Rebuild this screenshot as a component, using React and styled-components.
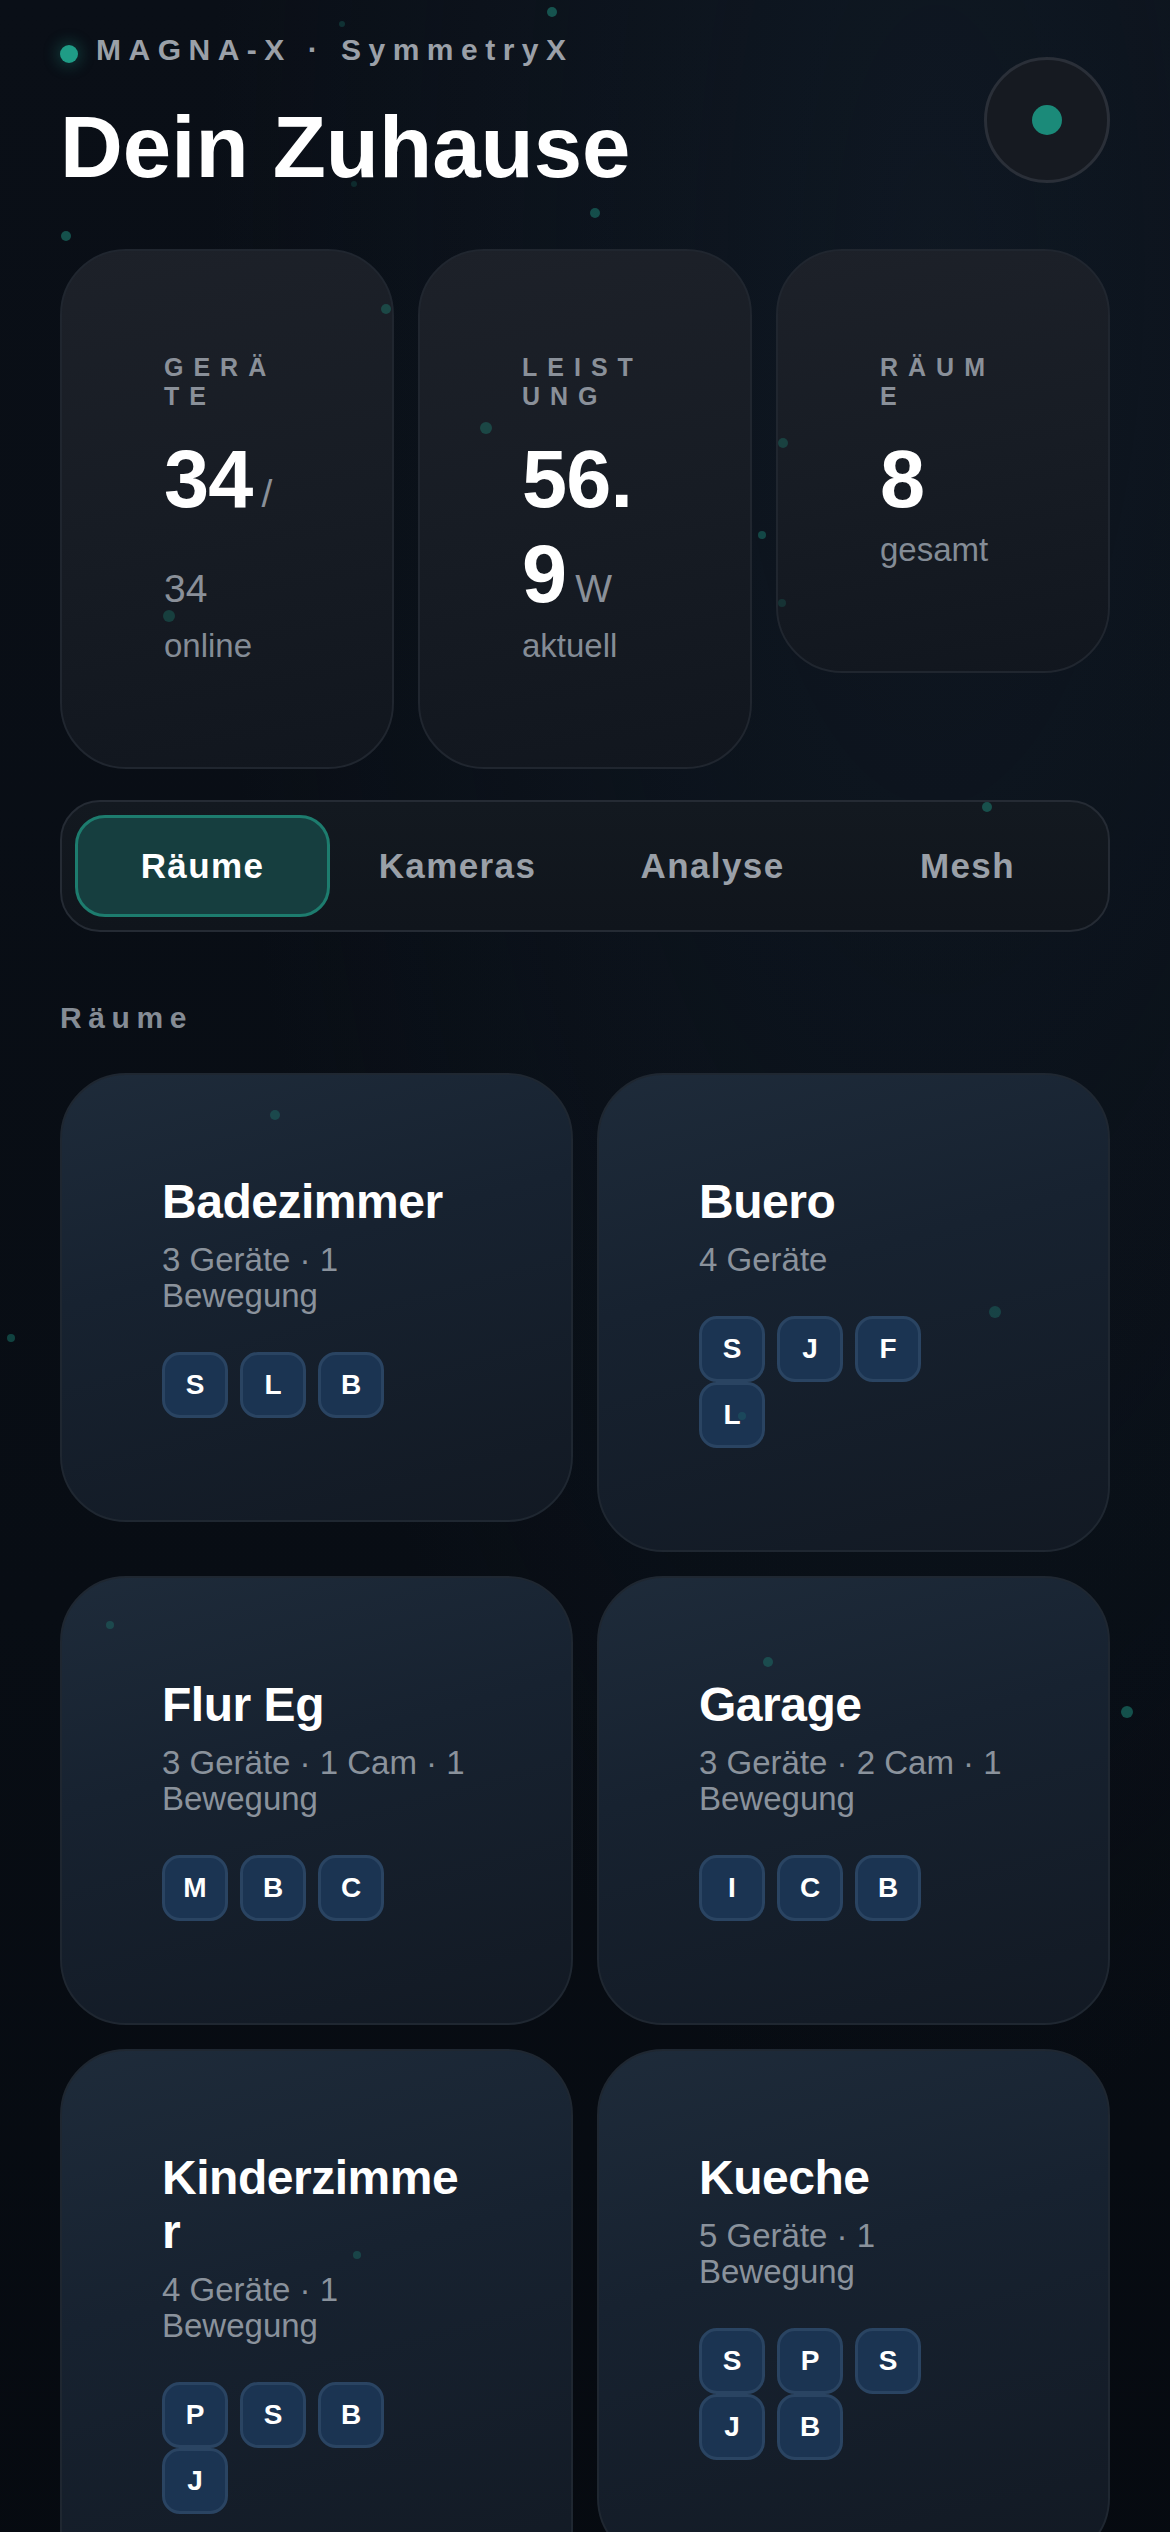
import React from 'react'
import styled, { createGlobalStyle } from 'styled-components'

const GlobalStyle = createGlobalStyle`
  html, body {
    margin: 0;
    padding: 0;
    background: #080d14;
  }
  body {
    font-family: 'Liberation Sans', Arial, sans-serif;
    color: #fff;
    -webkit-font-smoothing: antialiased;
  }
  * {
    box-sizing: border-box;
  }
`

const Page = styled.div`
  position: relative;
  min-height: 2532px;
  overflow: hidden;
  padding: 32px 60px 60px;
  background:
    radial-gradient(ellipse at 80% 10%, rgba(24, 40, 56, 0.35), transparent 55%),
    linear-gradient(180deg, #0a0f17 0%, #080d14 60%, #060a10 100%);
`

const Particles = styled.div`
  position: absolute;
  inset: 0;
  pointer-events: none;
  z-index: 2;
`

const Particle = styled.span`
  position: absolute;
  border-radius: 50%;
  background: #1f9482;
`

const Header = styled.header`
  display: flex;
  justify-content: space-between;
  align-items: flex-start;
`

const Brand = styled.div`
  display: flex;
  flex-direction: column;
`

const Eyebrow = styled.div`
  display: flex;
  align-items: center;
  gap: 18px;
  font-size: 30px;
  line-height: 36px;
  font-weight: 700;
  letter-spacing: 0.25em;
  color: #9ba0a8;
`

const Pulse = styled.span`
  width: 18px;
  height: 18px;
  margin-top: 8px;
  border-radius: 50%;
  background: #1f9c86;
  box-shadow: 0 0 14px 4px rgba(31, 156, 134, 0.25);
  flex-shrink: 0;
`

const Title = styled.h1`
  margin: 31px 0 0;
  font-size: 87px;
  line-height: 1.1;
  font-weight: 700;
  letter-spacing: 0;
  color: #fff;
`

const Orb = styled.div`
  width: 126px;
  height: 126px;
  margin-top: 25px;
  border-radius: 50%;
  border: 3px solid #2a2f38;
  background: #161a21;
  display: flex;
  align-items: center;
  justify-content: center;
`

const OrbDot = styled.span`
  width: 30px;
  height: 30px;
  border-radius: 50%;
  background: #1b8a79;
`

const StatGrid = styled.section`
  margin-top: 54px;
  display: grid;
  grid-template-columns: repeat(3, 1fr);
  gap: 24px;
  align-items: start;
`

const StatCard = styled.div`
  border-radius: 66px;
  border: 2px solid #20262f;
  padding: 102px;
  background: linear-gradient(170deg, #1d2129 0%, #171c24 50%, #11161e 100%);
`

const StatLabel = styled.div`
  font-size: 25px;
  line-height: 29px;
  font-weight: 700;
  letter-spacing: 0.4em;
  color: #8a9099;
  word-break: break-all;
`

const StatValue = styled.div`
  margin-top: 21px;
  font-size: 81px;
  line-height: 95px;
  font-weight: 700;
  letter-spacing: -0.01em;
  color: #fff;
  word-break: break-all;
`

const Unit = styled.span`
  margin-left: 9px;
  font-size: 39px;
  line-height: 1;
  font-weight: 400;
  letter-spacing: 0;
  color: #8a9099;
  word-break: normal;
`

const StatSub = styled.div`
  margin-top: ${p => p.$gap}px;
  font-size: 33px;
  line-height: 1.2;
  color: #848c96;
`

const TabBar = styled.nav`
  margin-top: 31px;
  display: grid;
  grid-template-columns: repeat(4, 1fr);
  padding: 13px;
  border-radius: 40px;
  border: 2px solid #252b34;
  background: linear-gradient(180deg, #131920 0%, #10151c 100%);
`

const Tab = styled.button`
  height: 102px;
  border-radius: 30px;
  border: 3px solid ${p => (p.$active ? '#1d7c6e' : 'transparent')};
  background: ${p => (p.$active ? '#163e3f' : 'transparent')};
  color: ${p => (p.$active ? '#ffffff' : '#9aa0a8')};
  font-family: inherit;
  font-size: 35px;
  font-weight: 700;
  letter-spacing: 0.04em;
  cursor: pointer;
  padding: 0;
`

const SectionLabel = styled.h2`
  margin: 68px 0 0;
  font-size: 30px;
  line-height: 36px;
  font-weight: 700;
  letter-spacing: 0.22em;
  color: #858c95;
`

const RoomGrid = styled.section`
  margin-top: 37px;
  display: grid;
  grid-template-columns: repeat(2, 1fr);
  gap: 24px;
  align-items: start;
`

const RoomCard = styled.article`
  border-radius: 66px;
  border: 2px solid #1f2731;
  padding: 100px 100px 102px;
  background: linear-gradient(165deg, #1e2b3a 0%, #172230 40%, #121923 100%);
`

const RoomName = styled.h3`
  margin: 0;
  font-size: 48px;
  line-height: 54px;
  font-weight: 700;
  letter-spacing: -0.01em;
  color: #fff;
  word-break: break-all;
`

const RoomMeta = styled.div`
  margin-top: 13px;
  font-size: 33px;
  line-height: 36px;
  color: #8a929c;
`

const ChipRow = styled.div`
  margin-top: 38px;
  max-width: 240px;
  display: flex;
  flex-wrap: wrap;
  column-gap: 12px;
`

const Chip = styled.span`
  width: 66px;
  height: 66px;
  border-radius: 18px;
  border: 3px solid #2a4462;
  background: #1b3452;
  display: flex;
  align-items: center;
  justify-content: center;
  font-size: 28px;
  font-weight: 700;
  color: #fff;
`

const particles = [
  [552, 12, 10, 0.5], [342, 24, 6, 0.25], [66, 236, 10, 0.5], [595, 213, 10, 0.45],
  [354, 184, 6, 0.2], [386, 309, 10, 0.35], [486, 428, 12, 0.35], [783, 443, 10, 0.3],
  [762, 535, 8, 0.4], [169, 616, 12, 0.3], [782, 603, 8, 0.2], [987, 807, 10, 0.45],
  [275, 1115, 10, 0.3], [11, 1338, 8, 0.4], [995, 1312, 12, 0.3], [742, 1416, 8, 0.2],
  [110, 1625, 8, 0.3], [768, 1662, 10, 0.35], [1127, 1712, 12, 0.5], [357, 2255, 8, 0.3],
]

const tabs = ['Räume', 'Kameras', 'Analyse', 'Mesh']

const rooms = [
  { name: 'Badezimmer', meta: '3 Geräte · 1 Bewegung', chips: ['S', 'L', 'B'] },
  { name: 'Buero', meta: '4 Geräte', chips: ['S', 'J', 'F', 'L'] },
  { name: 'Flur Eg', meta: '3 Geräte · 1 Cam · 1 Bewegung', chips: ['M', 'B', 'C'] },
  { name: 'Garage', meta: '3 Geräte · 2 Cam · 1 Bewegung', chips: ['I', 'C', 'B'] },
  { name: 'Kinderzimmer', meta: '4 Geräte · 1 Bewegung', chips: ['P', 'S', 'B', 'J'] },
  { name: 'Kueche', meta: '5 Geräte · 1 Bewegung', chips: ['S', 'P', 'S', 'J', 'B'] },
]

export default function App() {
  return (
    <>
      <GlobalStyle />
      <Page>
        <Particles>
          {particles.map(([x, y, s, o], i) => (
            <Particle
              key={i}
              style={{ left: x - s / 2, top: y - s / 2, width: s, height: s, opacity: o }}
            />
          ))}
        </Particles>

        <Header>
          <Brand>
            <Eyebrow>
              <Pulse />
              MAGNA-X · SymmetryX
            </Eyebrow>
            <Title>Dein Zuhause</Title>
          </Brand>
          <Orb>
            <OrbDot />
          </Orb>
        </Header>

        <StatGrid>
          <StatCard>
            <StatLabel>GERÄTE</StatLabel>
            <StatValue>
              34<Unit>/ 34</Unit>
            </StatValue>
            <StatSub $gap={4}>online</StatSub>
          </StatCard>
          <StatCard>
            <StatLabel>LEISTUNG</StatLabel>
            <StatValue>
              56.9<Unit>W</Unit>
            </StatValue>
            <StatSub $gap={4}>aktuell</StatSub>
          </StatCard>
          <StatCard>
            <StatLabel>RÄUME</StatLabel>
            <StatValue>8</StatValue>
            <StatSub $gap={3}>gesamt</StatSub>
          </StatCard>
        </StatGrid>

        <TabBar>
          {tabs.map((t, i) => (
            <Tab key={t} $active={i === 0}>
              {t}
            </Tab>
          ))}
        </TabBar>

        <SectionLabel>Räume</SectionLabel>

        <RoomGrid>
          {rooms.map(room => (
            <RoomCard key={room.name}>
              <RoomName>{room.name}</RoomName>
              <RoomMeta>{room.meta}</RoomMeta>
              <ChipRow>
                {room.chips.map((c, i) => (
                  <Chip key={i}>{c}</Chip>
                ))}
              </ChipRow>
            </RoomCard>
          ))}
        </RoomGrid>
      </Page>
    </>
  )
}
